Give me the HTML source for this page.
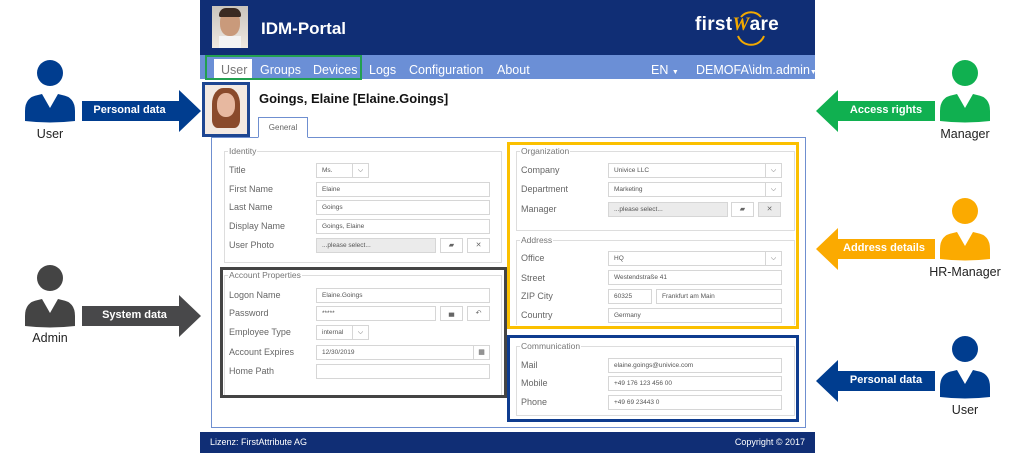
<!DOCTYPE html>
<html><head><meta charset="utf-8"><style>
*{margin:0;padding:0;box-sizing:border-box}
body{width:1024px;height:453px;background:#fff;position:relative;overflow:hidden;font-family:"Liberation Sans",sans-serif}
.a{position:absolute}
.lbl{position:absolute;font-size:9px;color:#666}
.in{position:absolute;height:15px;border:1px solid #d6d6d6;background:#fff;font-size:6.5px;color:#555;padding-left:5px;line-height:13px}
.dis{background:#ebebeb}
.btn{position:absolute;height:15px;width:23px;border:1px solid #d6d6d6;background:#fff;font-size:7px;color:#666;text-align:center;line-height:13px}
.fs{position:absolute;border:1px solid #ddd}
.fs span{position:absolute;top:-6px;left:3px;background:#fff;padding:0 1px;font-size:8.5px;color:#777}
.dd{position:absolute;right:0;top:0;width:16px;height:13px;border-left:1px solid #d6d6d6;font-size:7px;color:#555;text-align:center;line-height:13px}
.cap{position:absolute;font-size:12.5px;color:#222;text-align:center;width:100px}
.at{position:absolute;font-size:11px;font-weight:bold;color:#fff;text-align:center}
.nv{position:absolute;top:63px;font-size:12.5px;color:#fff}
</style></head><body>

<!-- header -->
<div class="a" style="left:200px;top:0;width:615px;height:55px;background:#102e75"></div>
<div class="a" style="left:212px;top:6px;width:36px;height:42px;background:linear-gradient(#c9c4bc,#efe9e2);"></div>
<div class="a" style="left:220px;top:10px;width:20px;height:26px;border-radius:45%;background:#c99a7b"></div>
<div class="a" style="left:219px;top:8px;width:22px;height:9px;border-radius:8px 8px 2px 2px;background:#3a2a22"></div>
<div class="a" style="left:219px;top:36px;width:22px;height:12px;background:#f4f4f4"></div>
<div class="a" style="left:261px;top:19px;font-size:17px;font-weight:bold;color:#fff">IDM-Portal</div>
<div class="a" style="left:695px;top:14px;font-size:19px;font-weight:bold;color:#fff;letter-spacing:0.3px">first<span style="color:#f2a900;font-style:italic;font-family:'Liberation Serif',serif">W</span>are</div>
<svg class="a" style="left:734px;top:10px" width="34" height="36"><path d="M7 7 A13 13 0 0 1 27 7" stroke="#f2a900" stroke-width="2" fill="none"/><path d="M4 26 A14 14 0 0 0 30 26" stroke="#f2a900" stroke-width="2" fill="none"/></svg>

<!-- nav -->
<div class="a" style="left:200px;top:55px;width:615px;height:24px;background:#6b8fd6"></div>
<div class="a" style="left:214px;top:59px;width:38px;height:20px;background:#fff"></div>
<div class="a" style="left:205px;top:55px;width:157px;height:25px;border:2px solid #22a050"></div>
<div class="nv" style="left:221px;color:#777">User</div>
<div class="nv" style="left:260px">Groups</div>
<div class="nv" style="left:313px">Devices</div>
<div class="nv" style="left:369px">Logs</div>
<div class="nv" style="left:409px">Configuration</div>
<div class="nv" style="left:497px">About</div>
<div class="nv" style="left:651px">EN <span style="font-size:7px">▼</span></div>
<div class="nv" style="left:696px">DEMOFA\idm.admin<span style="font-size:7px">▼</span></div>

<!-- user title -->
<div class="a" style="left:202px;top:82px;width:48px;height:55px;border:3px solid #1e4692;background:#f3e9e2"></div>
<div class="a" style="left:212px;top:88px;width:28px;height:40px;border-radius:40% 40% 20% 20%;background:#8a4a2c"></div>
<div class="a" style="left:217px;top:93px;width:18px;height:24px;border-radius:45%;background:#e7b8a0"></div>
<div class="a" style="left:259px;top:91px;font-size:13px;font-weight:bold;color:#111">Goings, Elaine [Elaine.Goings]</div>

<!-- tab & panel -->
<div class="a" style="left:211px;top:137px;width:595px;height:291px;border:1px solid #6f8fd0"></div>
<div class="a" style="left:258px;top:117px;width:50px;height:21px;border:1px solid #6f8fd0;border-bottom:1px solid #fff;background:#fff;font-size:8px;color:#666;text-align:center;line-height:20px">General</div>

<!-- identity -->
<div class="fs" style="left:224px;top:151px;width:278px;height:112px"><span>Identity</span></div>
<div class="lbl" style="left:229px;top:165px">Title</div>
<div class="in" style="left:316px;top:163px;width:53px">Ms.<div class="dd">⌵</div></div>
<div class="lbl" style="left:229px;top:184px">First Name</div>
<div class="in" style="left:316px;top:182px;width:174px">Elaine</div>
<div class="lbl" style="left:229px;top:202px">Last Name</div>
<div class="in" style="left:316px;top:200px;width:174px">Goings</div>
<div class="lbl" style="left:229px;top:221px">Display Name</div>
<div class="in" style="left:316px;top:219px;width:174px">Goings, Elaine</div>
<div class="lbl" style="left:229px;top:240px">User Photo</div>
<div class="in dis" style="left:316px;top:238px;width:120px">...please select...</div>
<div class="btn" style="left:440px;top:238px">▰</div>
<div class="btn" style="left:467px;top:238px">✕</div>

<!-- account -->
<div class="a" style="left:220px;top:267px;width:287px;height:131px;border:3px solid #444"></div>
<div class="fs" style="left:224px;top:275px;width:278px;height:120px;border-bottom:none"><span>Account Properties</span></div>
<div class="lbl" style="left:229px;top:290px">Logon Name</div>
<div class="in" style="left:316px;top:288px;width:174px">Elaine.Goings</div>
<div class="lbl" style="left:229px;top:308px">Password</div>
<div class="in" style="left:316px;top:306px;width:120px">*****</div>
<div class="btn" style="left:440px;top:306px">▗▖</div>
<div class="btn" style="left:467px;top:306px">↶</div>
<div class="lbl" style="left:229px;top:327px">Employee Type</div>
<div class="in" style="left:316px;top:325px;width:53px">internal<div class="dd">⌵</div></div>
<div class="lbl" style="left:229px;top:347px">Account Expires</div>
<div class="in" style="left:316px;top:345px;width:174px">12/30/2019<div class="dd">▦</div></div>
<div class="lbl" style="left:229px;top:366px">Home Path</div>
<div class="in" style="left:316px;top:364px;width:174px"></div>

<!-- organization -->
<div class="a" style="left:507px;top:142px;width:292px;height:187px;border:3px solid #fbc000"></div>
<div class="fs" style="left:516px;top:151px;width:279px;height:80px"><span>Organization</span></div>
<div class="lbl" style="left:521px;top:165px">Company</div>
<div class="in" style="left:608px;top:163px;width:174px">Univice LLC<div class="dd">⌵</div></div>
<div class="lbl" style="left:521px;top:184px">Department</div>
<div class="in" style="left:608px;top:182px;width:174px">Marketing<div class="dd">⌵</div></div>
<div class="lbl" style="left:521px;top:204px">Manager</div>
<div class="in dis" style="left:608px;top:202px;width:120px">...please select...</div>
<div class="btn" style="left:731px;top:202px">▰</div>
<div class="btn" style="left:758px;top:202px;background:#ebebeb">✕</div>

<div class="fs" style="left:516px;top:240px;width:279px;height:85px;border-bottom:none"><span>Address</span></div>
<div class="lbl" style="left:521px;top:253px">Office</div>
<div class="in" style="left:608px;top:251px;width:174px">HQ<div class="dd">⌵</div></div>
<div class="lbl" style="left:521px;top:273px">Street</div>
<div class="in" style="left:608px;top:270px;width:174px">Westendstraße 41</div>
<div class="lbl" style="left:521px;top:291px">ZIP City</div>
<div class="in" style="left:608px;top:289px;width:44px">60325</div>
<div class="in" style="left:656px;top:289px;width:126px">Frankfurt am Main</div>
<div class="lbl" style="left:521px;top:310px">Country</div>
<div class="in" style="left:608px;top:308px;width:174px">Germany</div>

<!-- communication -->
<div class="a" style="left:507px;top:335px;width:292px;height:87px;border:3px solid #0e3c8f"></div>
<div class="fs" style="left:516px;top:346px;width:279px;height:70px"><span>Communication</span></div>
<div class="lbl" style="left:521px;top:360px">Mail</div>
<div class="in" style="left:608px;top:358px;width:174px">elaine.goings@univice.com</div>
<div class="lbl" style="left:521px;top:378px">Mobile</div>
<div class="in" style="left:608px;top:376px;width:174px">+49 176 123 456 00</div>
<div class="lbl" style="left:521px;top:397px">Phone</div>
<div class="in" style="left:608px;top:395px;width:174px">+49 69 23443 0</div>

<!-- footer -->
<div class="a" style="left:200px;top:432px;width:615px;height:21px;background:#102e75"></div>
<div class="a" style="left:210px;top:437px;font-size:9px;color:#fff">Lizenz: FirstAttribute AG</div>
<div class="a" style="left:720px;top:437px;font-size:9px;color:#fff;width:85px;text-align:right">Copyright © 2017</div>

<!-- person icons -->
<svg width="0" height="0" style="position:absolute"><defs><g id="p"><circle cx="26" cy="14" r="13"/><path d="M1 62 L1 52 Q1 38 14 36 L18 35 L26 49 L34 35 L38 36 Q51 38 51 52 L51 62 Q26 65 1 62 Z"/></g></defs></svg>
<svg class="a" style="left:24px;top:59px" width="52" height="66" fill="#003d8f"><use href="#p"/></svg>
<div class="cap" style="left:0;top:127px">User</div>
<svg class="a" style="left:24px;top:264px" width="52" height="66" fill="#444"><use href="#p"/></svg>
<div class="cap" style="left:0;top:331px">Admin</div>
<svg class="a" style="left:939px;top:59px" width="52" height="66" fill="#10b050"><use href="#p"/></svg>
<div class="cap" style="left:915px;top:127px">Manager</div>
<svg class="a" style="left:939px;top:197px" width="52" height="66" fill="#fbaa00"><use href="#p"/></svg>
<div class="cap" style="left:915px;top:265px">HR-Manager</div>
<svg class="a" style="left:939px;top:335px" width="52" height="66" fill="#003d8f"><use href="#p"/></svg>
<div class="cap" style="left:915px;top:403px">User</div>

<!-- arrows -->
<svg class="a" style="left:82px;top:90px" width="120" height="42"><path d="M0 11 H97 V0 L119 21 L97 42 V31 H0 Z" fill="#003d8f"/></svg>
<div class="at" style="left:82px;top:104px;width:95px">Personal data</div>
<svg class="a" style="left:82px;top:295px" width="120" height="42"><path d="M0 11 H97 V0 L119 21 L97 42 V31 H0 Z" fill="#48484a"/></svg>
<div class="at" style="left:82px;top:309px;width:105px">System data</div>
<svg class="a" style="left:816px;top:90px" width="120" height="42"><path d="M119 11 H22 V0 L0 21 L22 42 V31 H119 Z" fill="#10b050"/></svg>
<div class="at" style="left:836px;top:104px;width:100px">Access rights</div>
<svg class="a" style="left:816px;top:228px" width="120" height="42"><path d="M119 11 H22 V0 L0 21 L22 42 V31 H119 Z" fill="#fbaa00"/></svg>
<div class="at" style="left:834px;top:242px;width:100px">Address details</div>
<svg class="a" style="left:816px;top:360px" width="120" height="42"><path d="M119 11 H22 V0 L0 21 L22 42 V31 H119 Z" fill="#003d8f"/></svg>
<div class="at" style="left:836px;top:374px;width:100px">Personal data</div>

</body></html>
